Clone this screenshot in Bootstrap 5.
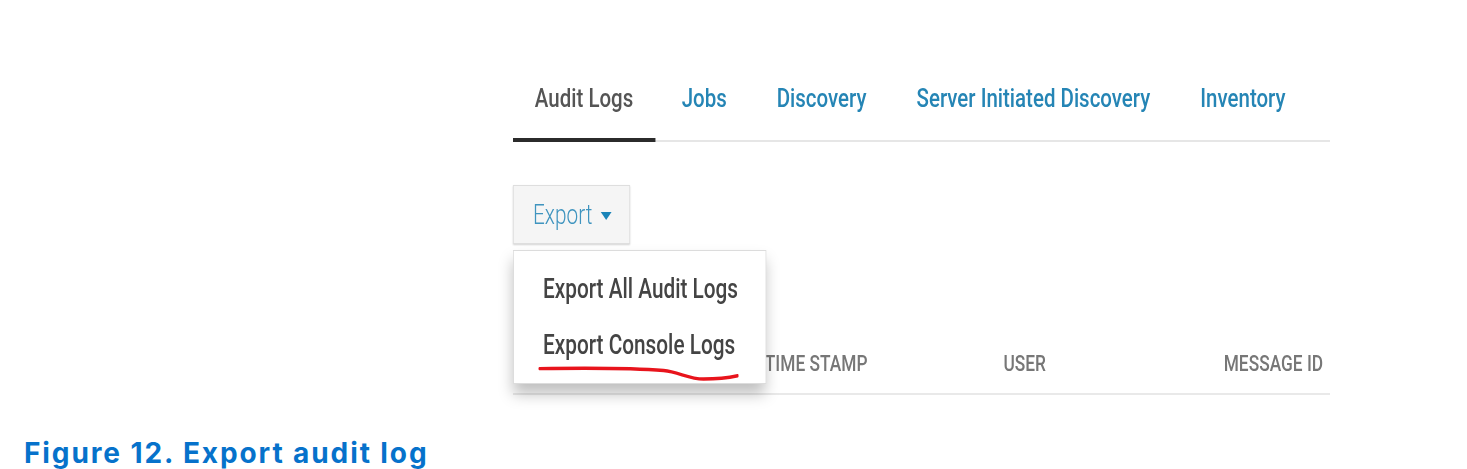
<!DOCTYPE html>
<html lang="en">
<head>
    <meta charset="UTF-8">
    <meta name="viewport" content="width=device-width, initial-scale=1.0">
    <title>Export audit log</title>
    <link href="https://cdn.jsdelivr.net/npm/bootstrap@5.3.0/dist/css/bootstrap.min.css" rel="stylesheet">
    <style>
        body {
            background-color: #fff;
            overflow: hidden;
        }
        /* the shot is a stretched, soft screenshot: squeeze it horizontally */
        .shot {
            width: 1061px;
            padding-top: 76px;
            height: 401px;
            font-family: Roboto, sans-serif;
            transform: translateX(513px) scaleX(.77);
            transform-origin: left top;
            filter: blur(.6px);
        }
        .shot-tabs {
            height: 66px;
            border-bottom: 2px solid #e6e6e6;
            flex-wrap: nowrap;
        }
        .shot-tabs .nav-link {
            padding: 0 32.5px;
            height: 66px;
            font-size: 26.6px;
            font-weight: 500;
            line-height: 44px;
            color: #2585b5;
            white-space: nowrap;
        }
        .shot-tabs .nav-link.active {
            padding: 0 28.4px;
            margin-right: 2px;
            color: #555;
            border-bottom: 4px solid #2b2b2b;
        }
        .export-wrap {
            margin-top: 43px;
        }
        .export-btn {
            width: 152px;
            height: 59px;
            padding: 2px 0 0 25px;
            font-size: 27px;
            font-weight: 300;
            text-align: left;
            color: #3f94bf;
            background-color: #f5f5f5;
            border: 1px solid #dedede;
            border-radius: 0;
            box-shadow: 0 1px 2px rgba(0, 0, 0, .18);
        }
        .export-caret {
            display: inline-block;
            margin-left: 11px;
            vertical-align: 4px;
            border-top: 8px solid #1a84b8;
            border-left: 7.5px solid transparent;
            border-right: 7.5px solid transparent;
        }
        .export-menu.dropdown-menu {
            top: 65px;
            left: 0;
            width: 329px;
            height: 134px;
            padding: 0;
            background-color: #fff;
            border: 1px solid #dcdcdc;
            border-radius: 0;
            box-shadow: 0 10px 16px rgba(0, 0, 0, .25);
        }
        .export-menu .dropdown-item {
            padding: 0 0 0 38px;
            font-size: 27px;
            font-weight: 500;
            line-height: 56px;
            color: #444;
        }
        .export-menu .dropdown-item:first-child {
            margin-top: 10px;
        }
        .red-mark {
            position: absolute;
            left: 32px;
            top: 113px;
            width: 260px;
            height: 17px;
        }
        .head-row {
            display: grid;
            grid-template-columns: 327px 310px 286px 1fr;
            height: 90px;
            margin-top: 61px;
            padding-top: 40px;
            border-bottom: 2px solid #e9e9e9;
            font-size: 22.5px;
            font-weight: 500;
            line-height: 36px;
            color: #777;
            white-space: nowrap;
        }
        .caption {
            margin: 34px 0 0 24px;
            font-family: Inter, sans-serif;
            font-size: 28px;
            font-weight: 700;
            line-height: 36px;
            letter-spacing: 1.9px;
            color: #0672cb;
        }
    </style>
</head>
<body>
    <div class="shot">
        <ul class="nav shot-tabs">
            <li class="nav-item"><a class="nav-link active" href="#">Audit Logs</a></li>
            <li class="nav-item"><a class="nav-link" href="#">Jobs</a></li>
            <li class="nav-item"><a class="nav-link" href="#">Discovery</a></li>
            <li class="nav-item"><a class="nav-link" href="#">Server Initiated Discovery</a></li>
            <li class="nav-item"><a class="nav-link" href="#">Inventory</a></li>
        </ul>

        <div class="export-wrap position-relative">
            <button type="button" class="btn export-btn">Export<span class="export-caret"></span></button>
            <div class="dropdown-menu show export-menu">
                <a class="dropdown-item" href="#">Export All Audit Logs</a>
                <a class="dropdown-item" href="#">Export Console Logs</a>
                <svg class="red-mark" viewBox="0 0 200 13" preserveAspectRatio="none">
                    <path d="M1 3.5C45 3 95 3 125 5C140 6 150 11.5 165 11.5C178 11.5 190 10.5 199 9" fill="none" stroke="#e8141c" stroke-width="2.6" stroke-linecap="round"/>
                </svg>
            </div>
        </div>

        <div class="head-row">
            <span></span>
            <span>TIME STAMP</span>
            <span>USER</span>
            <span>MESSAGE ID</span>
        </div>
    </div>
    <div class="caption">Figure 12. Export audit log</div>

    <script src="https://cdn.jsdelivr.net/npm/bootstrap@5.3.0/dist/js/bootstrap.bundle.min.js"></script>
</body>
</html>
